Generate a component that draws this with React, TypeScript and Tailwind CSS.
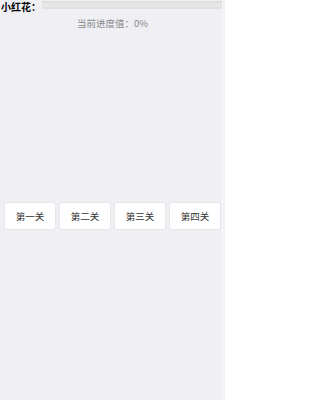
import React from "react";

export default function App() {
  const levels = ["第一关", "第二关", "第三关", "第四关"];
  return (
    <div
      className="w-[225px] h-[400px] bg-[#efeff4] flex flex-col relative overflow-hidden"
      style={{ fontFamily: '"Noto Sans CJK SC", "Noto Sans", sans-serif' }}
    >
      <div className="flex items-start h-[13px] pl-[1px] pr-[3px]">
        <span className="text-[10px] leading-[13px] font-bold text-black whitespace-nowrap w-[41px]">
          小红花：
        </span>
        <div className="flex-1 h-[8px] mt-[1px] bg-gradient-to-b from-[#dcdcdc] via-[#e8e8e8] to-[#dedede]" />
      </div>
      <div className="mt-[4px] text-center text-[9.5px] leading-[12px] text-[#8a8a8a]">
        当前进度值：0%
      </div>
      <div className="mt-[174px] flex gap-[5px] px-[5px]">
        {levels.map((l) => (
          <div
            key={l}
            className="w-[50px] h-[26px] bg-white rounded-[2px] shadow-[0_0_2px_rgba(0,0,0,0.12)] flex items-center justify-center text-[9.5px] text-[#333]"
          >
            {l}
          </div>
        ))}
      </div>
      <div className="absolute top-0 right-[2px] w-[1px] h-full bg-[#f8f8fa]" />
    </div>
  );
}
